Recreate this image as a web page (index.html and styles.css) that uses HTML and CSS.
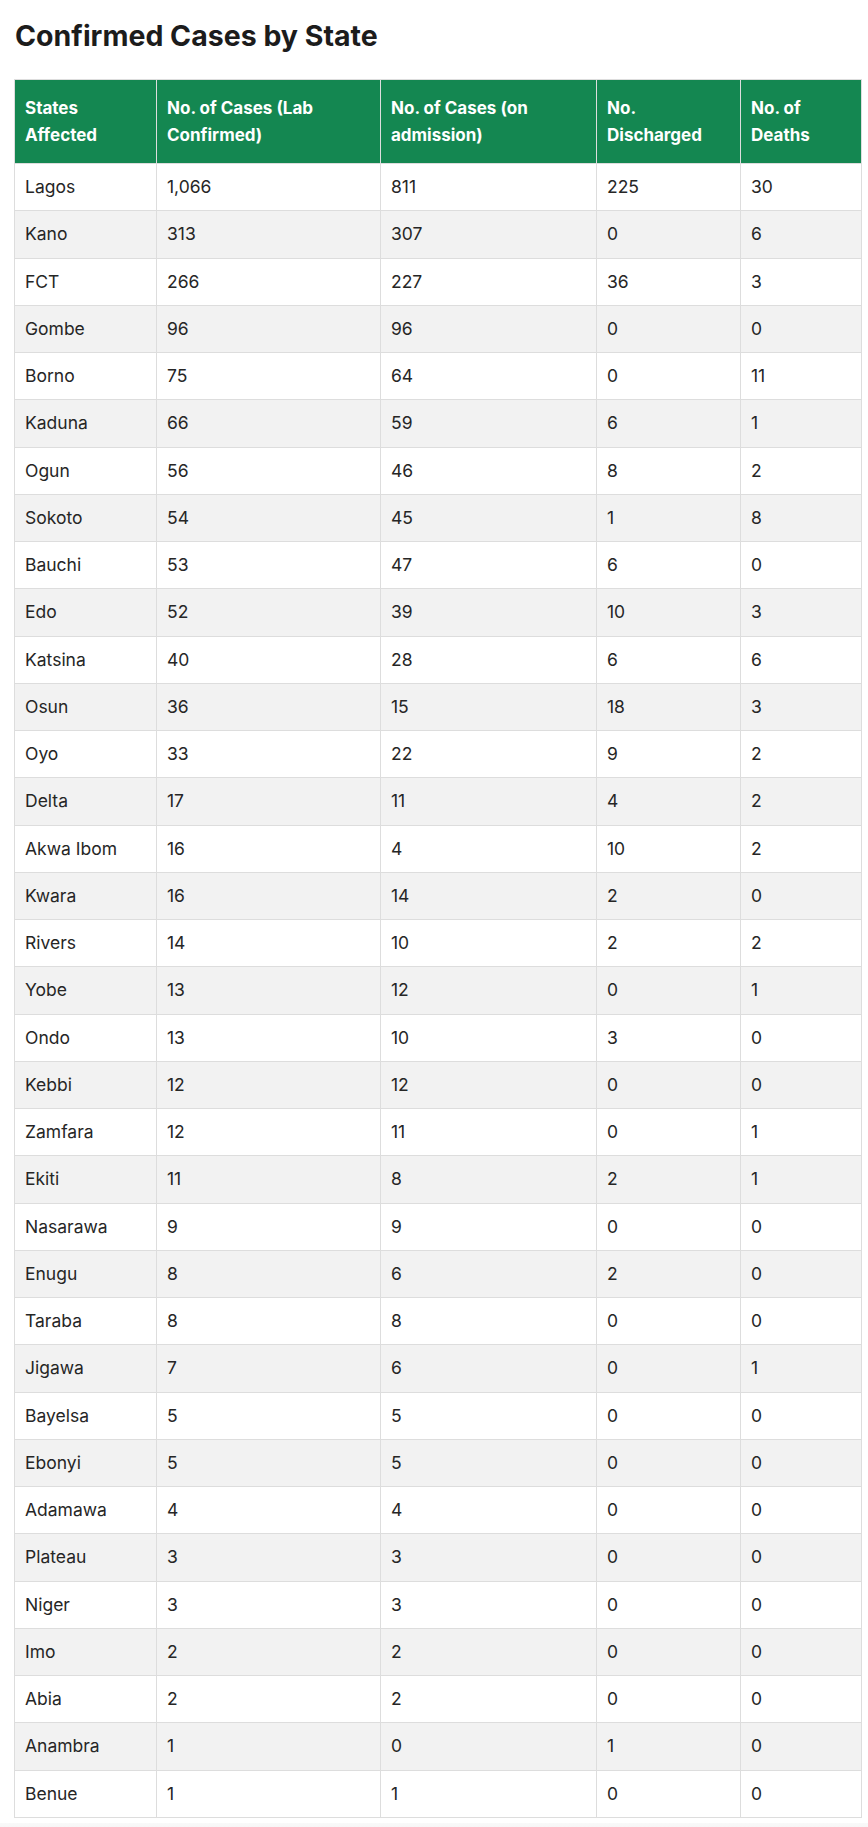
FILE: index.html
```html
<!DOCTYPE html>
<html lang="en">
<head>
<meta charset="utf-8">
<title>Confirmed Cases by State</title>
<link rel="stylesheet" href="styles.css">
</head>
<body>
<main class="page">
  <h2 class="title">Confirmed Cases by State</h2>
  <table class="cases">
    <colgroup>
      <col class="c1"><col class="c2"><col class="c3"><col class="c4"><col class="c5">
    </colgroup>
    <thead>
      <tr>
        <th>States<br>Affected</th>
        <th>No. of Cases (Lab<br>Confirmed)</th>
        <th>No. of Cases (on<br>admission)</th>
        <th>No.<br>Discharged</th>
        <th>No. of<br>Deaths</th>
      </tr>
    </thead>
    <tbody>
      <tr><td>Lagos</td><td>1,066</td><td>811</td><td>225</td><td>30</td></tr>
      <tr><td>Kano</td><td>313</td><td>307</td><td>0</td><td>6</td></tr>
      <tr><td>FCT</td><td>266</td><td>227</td><td>36</td><td>3</td></tr>
      <tr><td>Gombe</td><td>96</td><td>96</td><td>0</td><td>0</td></tr>
      <tr><td>Borno</td><td>75</td><td>64</td><td>0</td><td>11</td></tr>
      <tr><td>Kaduna</td><td>66</td><td>59</td><td>6</td><td>1</td></tr>
      <tr><td>Ogun</td><td>56</td><td>46</td><td>8</td><td>2</td></tr>
      <tr><td>Sokoto</td><td>54</td><td>45</td><td>1</td><td>8</td></tr>
      <tr><td>Bauchi</td><td>53</td><td>47</td><td>6</td><td>0</td></tr>
      <tr><td>Edo</td><td>52</td><td>39</td><td>10</td><td>3</td></tr>
      <tr><td>Katsina</td><td>40</td><td>28</td><td>6</td><td>6</td></tr>
      <tr><td>Osun</td><td>36</td><td>15</td><td>18</td><td>3</td></tr>
      <tr><td>Oyo</td><td>33</td><td>22</td><td>9</td><td>2</td></tr>
      <tr><td>Delta</td><td>17</td><td>11</td><td>4</td><td>2</td></tr>
      <tr><td>Akwa Ibom</td><td>16</td><td>4</td><td>10</td><td>2</td></tr>
      <tr><td>Kwara</td><td>16</td><td>14</td><td>2</td><td>0</td></tr>
      <tr><td>Rivers</td><td>14</td><td>10</td><td>2</td><td>2</td></tr>
      <tr><td>Yobe</td><td>13</td><td>12</td><td>0</td><td>1</td></tr>
      <tr><td>Ondo</td><td>13</td><td>10</td><td>3</td><td>0</td></tr>
      <tr><td>Kebbi</td><td>12</td><td>12</td><td>0</td><td>0</td></tr>
      <tr><td>Zamfara</td><td>12</td><td>11</td><td>0</td><td>1</td></tr>
      <tr><td>Ekiti</td><td>11</td><td>8</td><td>2</td><td>1</td></tr>
      <tr><td>Nasarawa</td><td>9</td><td>9</td><td>0</td><td>0</td></tr>
      <tr><td>Enugu</td><td>8</td><td>6</td><td>2</td><td>0</td></tr>
      <tr><td>Taraba</td><td>8</td><td>8</td><td>0</td><td>0</td></tr>
      <tr><td>Jigawa</td><td>7</td><td>6</td><td>0</td><td>1</td></tr>
      <tr><td>Bayelsa</td><td>5</td><td>5</td><td>0</td><td>0</td></tr>
      <tr><td>Ebonyi</td><td>5</td><td>5</td><td>0</td><td>0</td></tr>
      <tr><td>Adamawa</td><td>4</td><td>4</td><td>0</td><td>0</td></tr>
      <tr><td>Plateau</td><td>3</td><td>3</td><td>0</td><td>0</td></tr>
      <tr><td>Niger</td><td>3</td><td>3</td><td>0</td><td>0</td></tr>
      <tr><td>Imo</td><td>2</td><td>2</td><td>0</td><td>0</td></tr>
      <tr><td>Abia</td><td>2</td><td>2</td><td>0</td><td>0</td></tr>
      <tr><td>Anambra</td><td>1</td><td>0</td><td>1</td><td>0</td></tr>
      <tr><td>Benue</td><td>1</td><td>1</td><td>0</td><td>0</td></tr>
    </tbody>
  </table>
</main>
<div class="footer-edge"></div>
</body>
</html>
```

FILE: styles.css
```css
html, body {
  margin: 0;
  padding: 0;
  background: #ffffff;
}

body {
  font-family: Inter, "Open Sans", "Liberation Sans", sans-serif;
  color: #222222;
}

.page {
  padding: 0 7px 0 14px;
}

.title {
  margin: 0;
  padding: 21px 0 0 1px;
  font-size: 28.5px;
  line-height: 29px;
  font-weight: 700;
  color: #1c1c1c;
  letter-spacing: 0;
  height: 79px;
  box-sizing: border-box;
}

.cases {
  width: 847px;
  border-collapse: collapse;
  table-layout: fixed;
  border: 1px solid #dddddd;
}

.c1 { width: 142px; }
.c2 { width: 224px; }
.c3 { width: 216px; }
.c4 { width: 144px; }
.c5 { width: 121px; }

.cases th,
.cases td {
  border: 1px solid #dddddd;
  text-align: left;
  vertical-align: top;
  padding: 10px 10px;
  font-size: 17.5px;
  line-height: 26.25px;
}

.cases th {
  background: #148751;
  color: #ffffff;
  font-weight: 700;
  font-size: 17px;
  padding: 15px 10px 15px 10px;
  line-height: 26.5px;
}

.cases td {
  font-weight: 400;
  color: #262626;
}

.cases tbody tr:nth-child(even) td {
  background: #f2f2f2;
}

.footer-edge {
  margin-top: 5px;
  height: 8px;
  background: linear-gradient(#f9f9f9, #f4f4f4);
}
```
